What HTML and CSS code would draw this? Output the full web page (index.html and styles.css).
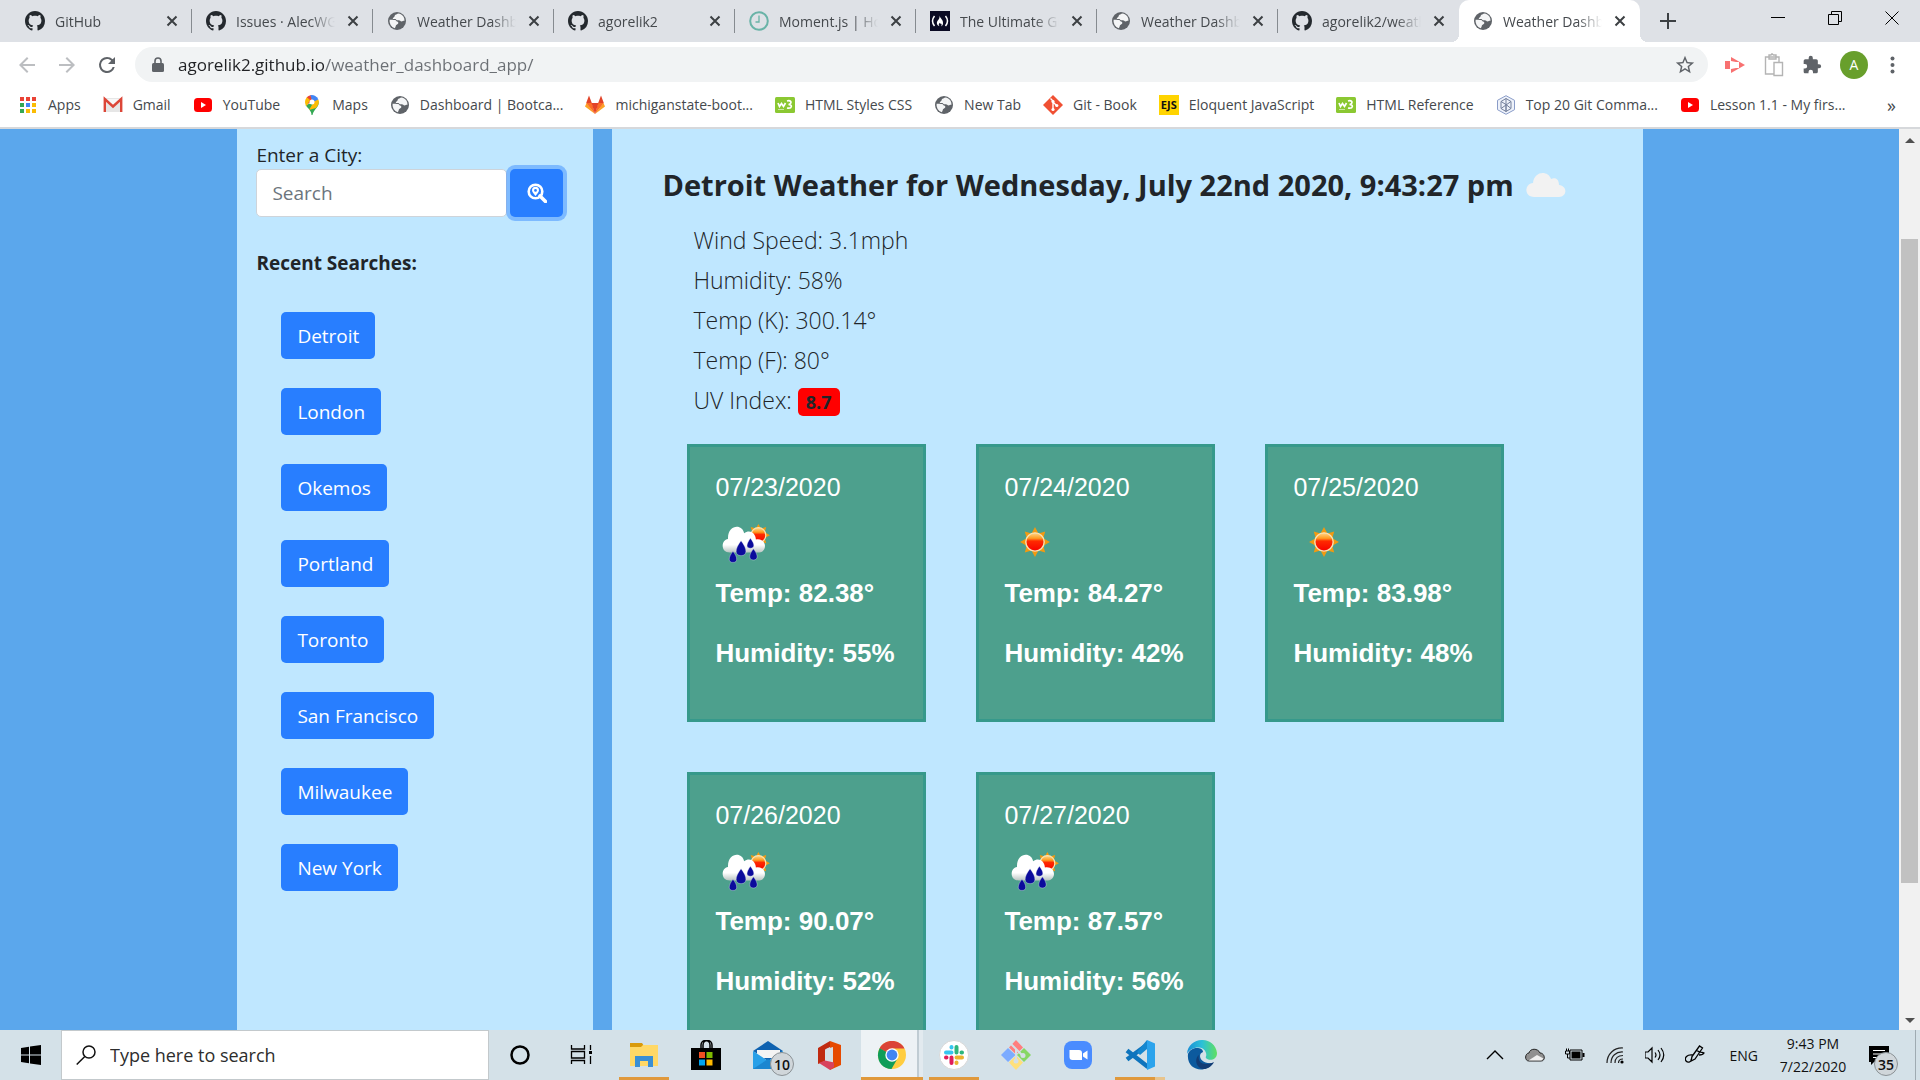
FILE: index.html
```html
<!DOCTYPE html>
<html lang="en">
<head>
<meta charset="utf-8">
<title>Weather Dashboard</title>
<link rel="stylesheet" href="styles.css">
</head>
<body>
<svg class="sprite" aria-hidden="true">
  <defs>
    <linearGradient id="sunFill" x1="0" y1="0" x2="0" y2="1"><stop offset="0" stop-color="#ffd98a"/><stop offset=".3" stop-color="#ff9a20"/><stop offset=".45" stop-color="#ff2a00"/><stop offset="1" stop-color="#f60000"/></linearGradient>
    <linearGradient id="cloudFill" x1="0" y1="0" x2="0" y2="1"><stop offset="0" stop-color="#fff"/><stop offset=".7" stop-color="#fff"/><stop offset="1" stop-color="#b9c4c2"/></linearGradient>
    <linearGradient id="edgeFill" x1="0" y1="0" x2="1" y2="0"><stop offset="0" stop-color="#1b8fd6"/><stop offset=".5" stop-color="#2cc0d8"/><stop offset="1" stop-color="#5fe060"/></linearGradient>
  </defs>
  <symbol id="github" viewBox="0 0 16 16"><path fill="#24292e" d="M8 0C3.58 0 0 3.58 0 8c0 3.54 2.29 6.53 5.47 7.59.4.07.55-.17.55-.38 0-.19-.01-.82-.01-1.49-2.01.37-2.53-.49-2.69-.94-.09-.23-.48-.94-.82-1.13-.28-.15-.68-.52-.01-.53.63-.01 1.08.58 1.23.82.72 1.21 1.87.87 2.33.66.07-.52.28-.87.51-1.07-1.78-.2-3.64-.89-3.64-3.95 0-.87.31-1.59.82-2.15-.08-.2-.36-1.02.08-2.12 0 0 .67-.21 2.2.82.64-.18 1.32-.27 2-.27.68 0 1.36.09 2 .27 1.53-1.04 2.2-.82 2.2-.82.44 1.1.16 1.92.08 2.12.51.56.82 1.27.82 2.15 0 3.07-1.87 3.75-3.65 3.95.29.25.54.73.54 1.48 0 1.07-.01 1.93-.01 2.2 0 .21.15.46.55.38A8.01 8.01 0 0 0 16 8c0-4.42-3.58-8-8-8z"/></symbol>
  <symbol id="globe" viewBox="0 0 20 20"><circle cx="10" cy="10" r="9" fill="#5f6368"/><path fill="#f4f5f6" d="M11 2.500c-1 1-2.600.8-3.200 2-.5 1-.2 1.600-1.200 1.900-1.400.4-.9 1.600.3 1.600 1.500 0 1.500-.3 2.300.7.6.8 1.700.6 2.700.6 1.200 0 1.500 1.200 2.600 1.200 1.400 0 1.700-.8 3-.6a7.600 7.600 0 0 0-4.600-7.200zM2.600 8.800c1.800.1 4 .1 5.500.2 1.200.1 1 1.300 1.900 1.600 1.200.4 1.500 1 1.200 1.900-.4 1.100-2 .9-2.300 2-.2.9-.6 2.500-1.200 2.700A7.500 7.500 0 0 1 2.600 8.800z"/></symbol>
  <symbol id="close" viewBox="0 0 12 12"><path d="M1.500 1.500l9 9M10.500 1.500l-9 9" stroke="#3c4043" stroke-width="2" fill="none"/></symbol>
  <symbol id="w3" viewBox="0 0 20 20"><rect y="2" width="20" height="16" rx="1.500" fill="#8bc832"/><path d="M3 8l1.500 3.500 2-3 2 3L10.500 8M12 6c5-1.500 5 3 1.500 3.500 4 0 4 4.500-1.500 3.500" fill="none" stroke="#fff" stroke-width="1.700"/><path d="M3 14.500h6" stroke="#c9e6a0"/></symbol>
  <symbol id="youtube" viewBox="0 0 18 14"><rect width="18" height="14" rx="3.500" fill="#f00"/><path d="M7 4l5 3-5 3z" fill="#fff"/></symbol>
  <symbol id="sun" viewBox="-2 -2 54 54"><path fill="#f29a10" d="M25 12l3 5.500 5.900-1.700-1.700 5.900 5.800 3.300-5.800 3.300 1.700 5.900-5.900-1.700L25 38l-3-5.500-5.900 1.700 1.700-5.900L12 25l5.800-3.300-1.700-5.900 5.900 1.700z"/><circle cx="25" cy="25" r="8" fill="url(#sunFill)" stroke="#f8e3b4" stroke-width="1.200"/></symbol>
  <symbol id="rain" viewBox="0 -2 50 50">
    <path fill="#f29a10" d="M35 8.500l2.100 3.700 4.200-1.200-1.200 4.200 4.200 2.300-4.200 2.300 1.200 4.200-4.200-1.200L35 26.700l-2-3.700-4.200 1.200 1.200-4.200V15l-1.200-4 4.200 1.200z"/><circle cx="35" cy="17.500" r="6" fill="url(#sunFill)" stroke="#f8e3b4"/>
    <path fill="url(#cloudFill)" d="M12 31.500C4 31.500 5 21 10.500 20.500 10 9 22 8 23.500 16c4-3 9-1 9.500 5 9-1.500 9.500 10 2.500 10.500z"/>
    <path fill="#0b0b9c" stroke="#e8ecf5" stroke-width=".3" d="M21 22c5.500 7 5 12 0 12s-5.500-5 0-12zM28.500 20c4 5 3.500 8 0 8s-3.500-3 0-8zM14.500 30.500c4 5 4 9 0 9s-4-4 0-9zM31 28.500c4 5 4 9 0 9s-4-4 0-9z"/>
  </symbol>
</svg>

<header class="browser">
  <nav class="tabs" aria-label="Open tabs">
    <div class="tab"><svg class="fav"><use href="#github"/></svg><a class="tab-title" href="#">GitHub</a><button class="tab-close" aria-label="Close tab"><svg><use href="#close"/></svg></button></div>
    <div class="tab"><svg class="fav"><use href="#github"/></svg><a class="tab-title" href="#">Issues · AlecWGo</a><button class="tab-close" aria-label="Close tab"><svg><use href="#close"/></svg></button></div>
    <div class="tab"><svg class="fav"><use href="#globe"/></svg><a class="tab-title" href="#">Weather Dashboard</a><button class="tab-close" aria-label="Close tab"><svg><use href="#close"/></svg></button></div>
    <div class="tab"><svg class="fav"><use href="#github"/></svg><a class="tab-title" href="#">agorelik2</a><button class="tab-close" aria-label="Close tab"><svg><use href="#close"/></svg></button></div>
    <div class="tab"><svg class="fav" viewBox="0 0 20 20"><circle cx="10" cy="10" r="8.800" fill="none" stroke="#69b3a7" stroke-width="2"/><path d="M10 4.500V11H6.500" fill="none" stroke="#69b3a7" stroke-width="1.300"/></svg><a class="tab-title" href="#">Moment.js | Home</a><button class="tab-close" aria-label="Close tab"><svg><use href="#close"/></svg></button></div>
    <div class="tab"><svg class="fav" viewBox="0 0 20 20"><path fill="#0a0a23" d="M0 0h20v20H0z"/><path d="M4.500 5Q.5 10 4.500 15M15.500 5q4 5 0 10" fill="none" stroke="#fff" stroke-width="1.500"/><path fill="#fff" d="M9.500 4.500c.5 3 4 4 3.500 8 0 1.500-1 2.500-2 2.700 1-1 .8-2.200-.2-3-.3 1-1 .8-1-.5-1.500 1.300-1.200 2.500-.2 3.500-3-.7-3.500-4-1.600-6 1.200-1.300 1.800-2.500 1.500-4.700z"/></svg><a class="tab-title" href="#">The Ultimate Guide</a><button class="tab-close" aria-label="Close tab"><svg><use href="#close"/></svg></button></div>
    <div class="tab"><svg class="fav"><use href="#globe"/></svg><a class="tab-title" href="#">Weather Dashboard</a><button class="tab-close" aria-label="Close tab"><svg><use href="#close"/></svg></button></div>
    <div class="tab last"><svg class="fav"><use href="#github"/></svg><a class="tab-title" href="#">agorelik2/weather</a><button class="tab-close" aria-label="Close tab"><svg><use href="#close"/></svg></button></div>
    <div class="tab active"><svg class="fav"><use href="#globe"/></svg><a class="tab-title" href="#">Weather Dashboard</a><button class="tab-close" aria-label="Close tab"><svg><use href="#close"/></svg></button></div>
    <button class="new-tab" aria-label="New tab"><svg width="16" height="16" viewBox="0 0 16 16"><path d="M8 0v16M0 8h16" stroke="#3c4043" stroke-width="2"/></svg></button>
    <div class="window-controls">
      <button aria-label="Minimize"><svg width="14" height="14" viewBox="0 0 14 14"><path d="M0 6.500h14" stroke="#000"/></svg></button>
      <button aria-label="Restore"><svg width="14" height="14" viewBox="0 0 14 14"><path d="M.5 3.500h10v10H.5zM3.500 3.500v-3h10v10h-3" fill="none" stroke="#000"/></svg></button>
      <button aria-label="Close window"><svg width="14" height="14" viewBox="0 0 14 14"><path d="M.5.500l13 13M13.500.500l-13 13" stroke="#000"/></svg></button>
    </div>
  </nav>

  <div class="toolbar">
    <button aria-label="Back"><svg width="24" height="24" viewBox="0 0 24 24"><path fill="#bcbec1" d="M20 11H7.830l5.590-5.590L12 4l-8 8 8 8 1.410-1.410L7.830 13H20z"/></svg></button>
    <button aria-label="Forward"><svg width="24" height="24" viewBox="0 0 24 24"><path fill="#bcbec1" d="M4 11h12.170l-5.590-5.590L12 4l8 8-8 8-1.410-1.410L16.170 13H4z"/></svg></button>
    <button aria-label="Reload"><svg width="24" height="24" viewBox="0 0 24 24"><path fill="#5f6368" d="M17.650 6.350A7.960 7.960 0 0 0 12 4a8 8 0 1 0 7.730 10h-2.080A6 6 0 1 1 12 6c1.660 0 3.140.690 4.220 1.780L13 11h7V4z"/></svg></button>
    <div class="omnibox">
      <svg width="12" height="16" viewBox="0 0 12 16"><rect y="6" width="12" height="9" rx="1.500" fill="#5f6368"/><path d="M3 7V4a3 3 0 0 1 6 0v3" fill="none" stroke="#5f6368" stroke-width="1.600"/></svg>
      <input class="url" type="text" aria-label="Address" value="agorelik2.github.io/weather_dashboard_app/">
      <button aria-label="Bookmark this page"><svg width="22" height="22" viewBox="0 0 24 24"><path fill="#5f6368" d="M22 9.240l-7.190-.620L12 2 9.190 8.630 2 9.240l5.460 4.730L5.820 21 12 17.270 18.180 21l-1.630-7.030zM12 15.400l-3.760 2.270 1-4.280-3.320-2.880 4.380-.380L12 6.100l1.710 4.040 4.380.380-3.320 2.880 1 4.280z"/></svg></button>
    </div>
    <div class="extensions">
      <button aria-label="Screen recorder"><svg width="22" height="20" viewBox="0 0 22 20"><path fill="#f87171" d="M1 6h5v8H1zM7 2l14 8-14 8v-4l5-1h3V7h-3L7 6z"/><path fill="#fff" d="M9 7.500l2 1v3l-2 1z"/></svg></button>
      <button aria-label="Clipboard"><svg width="20" height="24" viewBox="0 0 20 24"><path d="M10 21H1.500V4H15v5M5 4V2h2l1-1.200L9.500 2H12v4H5zM10 9.500h8.500v13H10z" fill="none" stroke="#b4b4b4" stroke-width="1.400"/></svg></button>
      <button aria-label="Extensions"><svg width="20" height="20" viewBox="0 0 24 24"><path fill="#5f6368" d="M20.500 11H19V7a2 2 0 0 0-2-2h-4V3.500a2.500 2.500 0 0 0-5 0V5H4a2 2 0 0 0-2 2v3.800h1.500a2.700 2.700 0 0 1 0 5.400H2V20c0 1.100.900 2 2 2h3.800v-1.500a2.700 2.700 0 0 1 5.400 0V22H17a2 2 0 0 0 2-2v-4h1.500a2.500 2.500 0 0 0 0-5z"/></svg></button>
      <button class="avatar" aria-label="Profile">A</button>
      <button class="menu" aria-label="Menu"><svg width="5" height="18" viewBox="0 0 5 18" fill="#5f6368"><circle cx="2.500" cy="2.500" r="2"/><circle cx="2.500" cy="9" r="2"/><circle cx="2.500" cy="15.500" r="2"/></svg></button>
    </div>
  </div>

  <nav class="bookmarks" aria-label="Bookmarks">
    <a href="#"><svg viewBox="0 0 20 20"><path fill="#ea4335" d="M2 2h4v4H2zM8 2h4v4H8zM14 2h4v4h-4z"/><path fill="#34a853" d="M2 8h4v4H2zM2 14h4v4H2z"/><path fill="#4285f4" d="M8 8h4v4H8z"/><path fill="#fbbc04" d="M14 8h4v4h-4zM8 14h4v4H8zM14 14h4v4h-4z"/></svg>Apps</a>
    <a href="#"><svg viewBox="0 0 20 20"><path fill="#e6e6e6" d="M1 3h18v14H1z"/><path fill="#f7f7f7" d="M1 4l9 8 9-8z"/><path d="M1.800 17V4l8.200 7.500L18.200 4v13" fill="none" stroke="#dc4638" stroke-width="2.400"/></svg>Gmail</a>
    <a href="#"><svg viewBox="-1 -3 20 20"><use href="#youtube" width="18" height="14"/></svg>YouTube</a>
    <a href="#"><svg viewBox="0 0 20 20"><path fill="#34a853" d="M3.500 10l13-4c1.500 6-5 8-6 14H9.500c0-4-3-6-6-10z"/><path fill="#4285f4" d="M8 .300a7 7 0 0 1 8.300 4L11 10z"/><path fill="#ea4335" d="M4.800 2.200A7 7 0 0 1 8.500.200L10 6l-4 3z"/><path fill="#fbbc04" d="M4.900 2.300L8 5 4.500 11.300C2.300 8.300 2.800 4.500 4.900 2.300zM12 6.500l4.500-2c1 4-.5 6-2.500 8.500L7 15z"/><circle cx="10" cy="7" r="2.500" fill="#fff"/></svg>Maps</a>
    <a href="#"><svg><use href="#globe"/></svg>Dashboard | Bootca...</a>
    <a href="#"><svg viewBox="0 0 20 20"><path fill="#fca326" d="M0 11.500L1.500 8l8.500 11L18.500 8l1.500 3.500L10 19z"/><path fill="#fc6d26" d="M1.200 8H7l3 11zM18.800 8H13l-3 11z"/><path fill="#e24329" d="M6.500 8h7L10 19zM1.200 8L4 .500 6.800 8zM18.800 8L16 .500 13.200 8z"/></svg>michiganstate-boot...</a>
    <a href="#"><svg><use href="#w3"/></svg>HTML Styles CSS</a>
    <a href="#"><svg><use href="#globe"/></svg>New Tab</a>
    <a href="#"><svg viewBox="0 0 20 20"><path fill="#f05033" d="M10 0l10 10-10 10L0 10z"/><path d="M7.500 3.500L10 6v9M10 7l4 4" stroke="#fff" stroke-width="1.400" fill="none"/><g fill="#fff"><circle cx="10" cy="6.500" r="1.600"/><circle cx="10" cy="14.500" r="1.600"/><circle cx="13.800" cy="10.500" r="1.600"/></g></svg>Git - Book</a>
    <a href="#"><span class="ejs">EJS</span>Eloquent JavaScript</a>
    <a href="#"><svg><use href="#w3"/></svg>HTML Reference</a>
    <a href="#"><svg viewBox="0 0 20 20"><path d="M10 .700l8.500 4.600v9.400L10 19.300l-8.500-4.600V5.300z" fill="#eef2fa" stroke="#8a9cc8"/><path d="M10 3.500l5 3v7l-5 3-5-3v-7zM5 13.500L15 6.500M10 3.500v13M5 6.500l5 3v7M15 13.500l-5-4" fill="none" stroke="#74809c"/></svg>Top 20 Git Comma...</a>
    <a href="#"><svg viewBox="-1 -3 20 20"><use href="#youtube" width="18" height="14"/></svg>Lesson 1.1 - My firs...</a>
    <button class="overflow" aria-label="More bookmarks">»</button>
  </nav>
</header>

<div class="viewport">
  <main class="page">
    <div class="container">
      <aside class="sidebar">
        <form class="search">
          <label for="city">Enter a City:</label>
          <div class="search-row">
            <input id="city" type="text" placeholder="Search">
            <button type="button" aria-label="Search city"><svg width="20" height="20" viewBox="0 0 20 20"><circle cx="8.500" cy="8.500" r="6.800" fill="none" stroke="#fff" stroke-width="2.600"/><path d="M13 13l5.500 5.500" stroke="#fff" stroke-width="3.600" stroke-linecap="round"/><path fill="#fff" fill-rule="evenodd" d="M8.500 13C6.500 10.500 5 9 5 7.300a3.500 3.500 0 0 1 7 0c0 1.700-1.500 3.200-3.500 5.700zm0-4.200a1.400 1.400 0 1 0 0-2.800 1.400 1.400 0 0 0 0 2.800z"/></svg></button>
          </div>
        </form>
        <h2>Recent Searches:</h2>
        <ul class="recent">
          <li><button>Detroit</button></li>
          <li><button>London</button></li>
          <li><button>Okemos</button></li>
          <li><button>Portland</button></li>
          <li><button>Toronto</button></li>
          <li><button>San Francisco</button></li>
          <li><button>Milwaukee</button></li>
          <li><button>New York</button></li>
        </ul>
      </aside>
      <section class="weather">
        <h1>Detroit Weather for Wednesday, July 22nd 2020, 9:43:27 pm <svg width="40" height="26" viewBox="0 0 40 26"><path fill="#f2f2f2" d="M8 25C-2 25-2 12 7 11 8-1 22-2 25 7c5-2 8 1 8 6 9 1 8 12 0 12z"/></svg></h1>
        <ul class="details">
          <li>Wind Speed: 3.1mph</li>
          <li>Humidity: 58%</li>
          <li>Temp (K): 300.14°</li>
          <li>Temp (F): 80°</li>
          <li>UV Index: <span class="uv">8.7</span></li>
        </ul>
        <div class="cards">
          <article class="card"><h3>07/23/2020</h3><svg><use href="#rain"/></svg><p>Temp: 82.38°</p><p>Humidity: 55%</p></article>
          <article class="card"><h3>07/24/2020</h3><svg><use href="#sun"/></svg><p>Temp: 84.27°</p><p>Humidity: 42%</p></article>
          <article class="card"><h3>07/25/2020</h3><svg><use href="#sun"/></svg><p>Temp: 83.98°</p><p>Humidity: 48%</p></article>
          <article class="card"><h3>07/26/2020</h3><svg><use href="#rain"/></svg><p>Temp: 90.07°</p><p>Humidity: 52%</p></article>
          <article class="card"><h3>07/27/2020</h3><svg><use href="#rain"/></svg><p>Temp: 87.57°</p><p>Humidity: 56%</p></article>
        </div>
      </section>
    </div>
  </main>
  <div class="scrollbar" aria-hidden="true">
    <svg width="10" height="5" viewBox="0 0 10 5"><path d="M0 5l5-5 5 5z" fill="#505050"/></svg>
    <div class="track"><div class="thumb"></div></div>
    <svg width="10" height="5" viewBox="0 0 10 5"><path d="M0 0l5 5 5-5z" fill="#505050"/></svg>
  </div>
</div>

<footer class="taskbar">
  <button class="start" aria-label="Start"><svg width="20" height="20" viewBox="0 0 20 20"><path d="M0 3l8-1.200V9.500H0zM9 1.600L20 0v9.500H9zM0 10.500h8v7.700L0 17zM9 10.500h11V20L9 18.400z"/></svg></button>
  <label class="task-search"><svg width="20" height="20" viewBox="0 0 20 20"><circle cx="13" cy="7" r="6" fill="none" stroke="#111" stroke-width="1.500"/><path d="M8.800 11.500L.700 19.500" stroke="#111" stroke-width="1.500"/></svg><input type="text" placeholder="Type here to search" aria-label="Type here to search"></label>
  <div class="apps">
    <button aria-label="Cortana"><svg viewBox="0 0 30 30"><circle cx="15" cy="15" r="8.500" fill="none" stroke="#000" stroke-width="2.500"/></svg></button>
    <button aria-label="Task view"><svg viewBox="0 0 30 30"><path d="M4.500 5v4h13V5M4.500 24v-3.500h13V24M4.500 11.500h13v6.500h-13zM23.500 5v5M23.500 16v8" fill="none" stroke="#000" stroke-width="1.300"/><path d="M22 11h3v3h-3z"/></svg></button>
    <button class="open" aria-label="File Explorer"><svg viewBox="0 0 30 30"><path fill="#d99a0b" d="M1 3h12l2 3v5H1z"/><path fill="#ffd866" d="M1 7h11l2-2h15v21H1z"/><path fill="#3a8fd4" d="M6 26V16h18v11h-5v-6h-8v6H6z"/></svg></button>
    <button aria-label="Store"><svg viewBox="0 0 30 30"><path d="M0 8h30v22H0z"/><path d="M10 9V5a4.500 4.500 0 0 1 9 0v4M12 9V5a4.500 4.500 0 0 1 9 0v4" fill="none" stroke="#000" stroke-width="1.500"/><path fill="#f25022" d="M8 12h6v6H8z"/><path fill="#7fba00" d="M15.500 12h6v6h-6z"/><path fill="#00a4ef" d="M8 19.500h6v6H8z"/><path fill="#ffb900" d="M15.500 19.500h6v6h-6z"/></svg></button>
    <button class="mail" aria-label="Mail"><svg viewBox="0 0 30 30"><path fill="#0f62b0" d="M0 11L15 1l15 10-15 10z"/><path fill="#f4f4f4" d="M4 10h23v8H4z"/><path fill="#28a0e8" d="M0 11l15 10 15-10v18H0z"/><path fill="#1b86d0" d="M0 29l15-10 15 10z"/></svg><span class="badge">10</span></button>
    <button aria-label="Office"><svg viewBox="0 0 30 30"><path fill="#c02a10" d="M3 8l12-7v6l-5 2.500V21l-7 3z"/><path fill="#e64a00" d="M15 1l11 4v20l-11 5z"/><path fill="#d4dfe6" d="M11 9l7-2v16l-7-2z"/><path fill="#d8425c" d="M4 23l6-2.500 9 2V27l-4 3z"/></svg></button>
    <button class="open current" aria-label="Chrome"><svg viewBox="0 0 30 30"><circle cx="15" cy="15" r="14" fill="#ffcd40"/><path fill="#db4437" d="M15 15L2.500 8.500C7-1.500 23-1.500 27.500 8.500H15z"/><path fill="#0f9d58" d="M2.700 8.200L15 15l5.500 3.500L14.500 29C3 29-2 17 2.700 8.200z"/><circle cx="15" cy="15" r="6.700" fill="#fff"/><circle cx="15" cy="15" r="5.400" fill="#4285f4"/></svg></button>
    <button class="open" aria-label="Slack"><svg viewBox="0 0 30 30"><circle cx="15" cy="15" r="14.500" fill="#fff" stroke="#d8d8d8"/><g stroke-width="4" stroke-linecap="round"><path stroke="#36c5f0" d="M7 12.500h5.500M12.500 7v.500"/><path stroke="#2eb67d" d="M17.500 7v5.500M22.500 12.500h.5"/><path stroke="#ecb22e" d="M17.500 17.500H23M17.500 22.500v.5"/><path stroke="#e01e5a" d="M12.500 17.500V23M7 17.500h.5"/></g></svg></button>
    <button aria-label="Git"><svg viewBox="0 0 30 30"><path fill="#ff7e7e" d="M15 0l7 7.500-7 7-7-7z"/><path fill="#86d765" d="M23 8l7 7-7 7-7-7z"/><path fill="#ffe07a" d="M15 15.500l7 7-7 7.500-7-7.500z"/><path fill="#7cabff" d="M7 8l7.500 7L7 22l-7-7z"/><path d="M10 4l5 5v13M15 9l7 7" stroke="#d4dfe6" stroke-width="2" fill="none"/><circle cx="15" cy="21" r="2.500" fill="#d4dfe6"/><circle cx="22" cy="15.500" r="2.500" fill="#d4dfe6"/></svg></button>
    <button aria-label="Zoom"><svg viewBox="0 0 30 30"><rect x="1" y="1" width="28" height="28" rx="8" fill="#4a8cff"/><path fill="#fff" d="M6.500 10H16a3 3 0 0 1 3 3v7H9.500a3 3 0 0 1-3-3zM20 13.500l4.500-3v9l-4.500-3z"/></svg></button>
    <button class="open stacked" aria-label="Visual Studio Code"><svg viewBox="0 0 30 30"><path d="M2 10.500L23 27M2 19.500L23 4" stroke="#0e74bd" stroke-width="4.500"/><path fill="#2ba3ec" d="M22 0l8 3.500v23L22 30z"/><path fill="#1687cf" d="M22 0v9l-7 6-3-3z"/></svg></button>
    <button aria-label="Edge"><svg viewBox="0 0 30 30"><path fill="#0c5a9e" d="M1 14C4 6 16 7 16 12c-6 2-3 13 10 11-7 11-27 8-25-9z"/><path fill="url(#edgeFill)" d="M0 14C1-4 28-5 30 13c0 8-9 8-11 5-1-1 1-2 0-5C17 5 4 6 0 14z"/><path fill="#123c75" d="M12 15c-2 7 4 12 15 7-4 8-13 9-16 4-3-4-2-9 1-11z"/></svg></button>
  </div>
  <div class="tray">
    <button aria-label="Show hidden icons"><svg viewBox="0 0 20 20"><path d="M2 14l8-8 8 8" fill="none" stroke="#000" stroke-width="1.400"/></svg></button>
    <button aria-label="OneDrive"><svg viewBox="0 0 20 20"><path d="M4 16C-1 16 0 8 4 8c1-5 9-5 11 0 5 0 6 8 1 8z" fill="#909090" stroke="#222"/><path fill="#f0f0f0" d="M3.500 15.500L12 10l6.500 3.500-2 2z"/></svg></button>
    <button aria-label="Battery"><svg viewBox="0 0 20 20"><path d="M5 5h12v10H5z" stroke="#000" fill="none"/><path d="M6.500 6.500h9v7h-9zM17.500 8h2v4h-2z"/><path d="M.500 6h4v3h-4zM1.500 3.500V6M3.500 3.500V6M2.500 9v4H5" fill="none" stroke="#000"/></svg></button>
    <button aria-label="Wi-Fi"><svg viewBox="0 0 20 20"><path d="M2 18C2 9 9 2.500 18 3M6 18c0-7 5-11.500 12-11M10 18c0-5 3-7.500 8-7.500M13.500 18c0-2.500 1.500-4 4.500-4" fill="none" stroke="#222" stroke-width="1.200"/><circle cx="17" cy="17" r="1.600"/></svg></button>
    <button aria-label="Volume"><svg viewBox="0 0 20 20"><path d="M0 7h3l4-4v14l-4-4H0zM10 7.500q2 2.500 0 5M13 5q4 5 0 10M16 3q5.500 7 0 14" fill="none" stroke="#000" stroke-width="1.200"/></svg></button>
    <button aria-label="Pen"><svg viewBox="0 0 20 20"><path d="M7 11.500L14.500 1l3 2L10 14l-4 2zM11 5c4 3 6 2 8 3-1 2-3 2-5 2M8 10c-6-1-9 3-7 6 2 2 6 1 5-2" fill="none" stroke="#000" stroke-width="1.300"/></svg></button>
    <span class="lang">ENG</span>
    <div class="clock"><span>9:43 PM</span><span>7/22/2020</span></div>
    <button class="notes" aria-label="Notifications"><svg viewBox="0 0 20 20"><path d="M0 1h20v16H5l-3 3v-3H0z"/><path d="M4 5.500h12M4 9h12M4 12.500h8" stroke="#fff"/></svg><span class="badge">35</span></button>
  </div>
</footer>
</body>
</html>
```
FILE: styles.css
```css
* { box-sizing: border-box; }
body {
  margin: 0;
  height: 100vh;
  display: flex;
  flex-direction: column;
  overflow: hidden;
  background: #5ba7ec;
  color: #212529;
  font-family: "Open Sans", "Noto Sans", sans-serif;
}
button, input { font: inherit; color: inherit; border: 0; padding: 0; margin: 0; background: none; outline: 0; }
button { display: inline-flex; align-items: center; justify-content: center; }
a { color: inherit; text-decoration: none; }
ul { list-style: none; margin: 0; padding: 0; }
svg { display: block; flex: none; }
.sprite { position: absolute; width: 0; height: 0; }

/* Browser window */
.browser { flex: none; background: #fff; border-bottom: 2px solid #d6d8db; font-size: 14px; color: #45494d; }
.tabs { display: flex; height: 42px; padding-left: 11px; background: #dee1e6; }
.tab { position: relative; display: flex; align-items: center; flex: 0 0 181px; min-width: 0; padding: 0 12px 0 14px; gap: 10px; }
.tab::after { content: ""; position: absolute; right: 0; top: 9px; width: 1px; height: 24px; background: #868b90; }
.tab.last::after { display: none; }
.tab.active { background: #fff; border-radius: 10px 10px 0 0; }
.tab.active::before, .tab.active::after { content: ""; position: absolute; top: auto; bottom: 0; width: 8px; height: 8px; }
.tab.active::before { left: -8px; background: radial-gradient(circle at 0 0, #dee1e6 8px, #fff 8px); }
.tab.active::after { right: -8px; background: radial-gradient(circle at 100% 0, #dee1e6 8px, #fff 8px); }
.fav { width: 20px; height: 20px; }
.tab-title {
  flex: 1;
  min-width: 0;
  overflow: hidden;
  white-space: nowrap;
  -webkit-mask-image: linear-gradient(90deg, #000 75%, transparent);
  mask-image: linear-gradient(90deg, #000 75%, transparent);
}
.tab-close svg { width: 12px; height: 12px; }
.tab-close { width: 16px; }
.new-tab { width: 56px; }
.window-controls { display: flex; align-items: center; margin-left: auto; height: 36px; }
.window-controls button { width: 57px; height: 36px; }

.toolbar { display: flex; align-items: center; gap: 16px; height: 45px; padding: 0 22px 0 15px; }
.omnibox { display: flex; align-items: center; flex: 1; height: 35px; padding: 0 12px 0 17px; border-radius: 18px; background: #f1f3f4; }
.url {
  flex: 1;
  margin-left: 14px;
  font-size: 17px;
  color: transparent;
  background: linear-gradient(90deg, #202124 146px, #6b6f74 146px);
  -webkit-background-clip: text;
  background-clip: text;
}
.extensions { display: flex; align-items: center; gap: 18px; }
.avatar { width: 28px; height: 28px; border-radius: 50%; background: #689f2c; color: #fff; font-size: 14px; }
.menu { width: 12px; }

.bookmarks { display: flex; align-items: center; gap: 22px; height: 40px; padding: 0 24px 5px 18px; }
.bookmarks a { display: flex; align-items: center; gap: 10px; white-space: nowrap; }
.bookmarks svg { width: 20px; height: 20px; }
.ejs { width: 20px; height: 20px; background: #ffd400; color: #111; font-size: 11px; font-weight: 700; line-height: 20px; text-align: center; }
.overflow { margin-left: auto; font-size: 18px; }

/* Page */
.viewport { display: flex; flex: 1; min-height: 0; }
.page { flex: 1; overflow: hidden; }
.container { display: flex; width: 75%; min-height: 100%; margin: 0 auto; gap: 19px; }
.sidebar { flex: 0 0 25%; padding: 12px 19px; background: #bfe7ff; font-size: 19px; }
.search label { display: block; line-height: 28px; }
.search-row { display: flex; gap: 3px; }
.search-row input { width: 251px; height: 48px; padding: 0 15px; border: 1px solid #ced4da; border-radius: 5px; background: #fff; }
.search-row input::placeholder { color: #6c757d; opacity: 1; }
.search-row button { width: 53px; height: 48px; border-radius: 5px; background: #287eff; box-shadow: 0 0 0 4px rgba(60, 141, 255, .5); }
.sidebar h2 { margin: 31px 0 34px; font-size: 19px; line-height: 30px; font-weight: 700; }
.recent { display: grid; gap: 29px; padding-left: 25px; }
.recent li { display: flex; }
.recent button { height: 47px; padding: 0 16px; border-radius: 5px; background: #287eff; color: #fff; }

.weather { flex: 1; min-width: 0; margin-right: 19px; padding: 37px 50px 50px; background: #bfe7ff; }
.weather h1 { display: flex; align-items: center; gap: 12px; margin: 0; font-size: 29px; line-height: 38px; font-weight: 700; white-space: nowrap; }
.details { padding: 16px 31px 24px; font-size: 23px; font-weight: 300; line-height: 40px; }
.uv { display: inline-block; padding: 0 8px; border-radius: 5px; background: #f00; font-size: 18px; font-weight: 700; line-height: 28px; }
.cards { display: flex; flex-wrap: wrap; gap: 50px; padding-left: 25px; }
.card { flex: 0 0 239px; height: 278px; padding: 20px 25px; border: 3px solid #36998b; background: #4da08d; color: #fff; font-family: "Liberation Sans", Arial, sans-serif; }
.card h3 { margin: 0; font-size: 25px; line-height: 40px; font-weight: 400; }
.card svg { width: 62px; height: 62px; margin-top: 4px; }
.card p { margin: 0 0 20px; font-size: 26px; line-height: 40px; font-weight: 700; white-space: nowrap; }

.scrollbar { display: flex; flex-direction: column; align-items: center; width: 21px; padding: 9px 0 7px; background: #f1f1f1; }
.track { flex: 1; width: 17px; margin: 8px 0; }
.thumb { height: 75%; margin-top: 88px; background: #c1c1c1; }

/* Taskbar */
.taskbar { display: flex; flex: none; height: 50px; background: #d4e1e8; color: #111; }
.start { width: 61px; }
.task-search { display: flex; align-items: center; gap: 14px; width: 428px; padding: 0 14px; border: 1px solid #c3c9cc; background: #fff; }
.task-search input { flex: 1; font-size: 18px; }
.task-search input::placeholder { color: #2d2d2d; opacity: 1; }
.apps { display: grid; grid-template-columns: repeat(12, 62px); }
.apps button { position: relative; }
.apps svg { width: 30px; height: 30px; }
.apps .open::after { content: ""; position: absolute; left: 6px; right: 6px; bottom: 0; height: 3px; background: #e0993c; }
.apps .current { background: linear-gradient(90deg, #edf2f5 56px, #c0ccd3 56px, #c0ccd3 58px, #e2eaef 58px); }
.apps .current::after { left: 0; right: 0; }
.apps .stacked::after { background: linear-gradient(90deg, #e0993c 80%, #e8c48c 80%); }
.badge { position: absolute; display: grid; place-items: center; width: 24px; height: 24px; border: 1px solid #8b9296; border-radius: 50%; background: #d0d6da; font-size: 14px; font-weight: 600; }
.mail .badge { right: 5px; bottom: 4px; }
.tray { display: flex; align-items: center; gap: 20px; margin: 0 4px 0 auto; padding-right: 25px; border-right: 1px solid #9fabb2; font-size: 14px; }
.tray svg { width: 20px; height: 20px; }
.lang { margin-left: 5px; }
.clock { display: flex; flex-direction: column; align-items: center; width: 70px; line-height: 23px; }
.notes { position: relative; width: 22px; height: 22px; }
.notes .badge { left: 6px; top: 8px; }
```
